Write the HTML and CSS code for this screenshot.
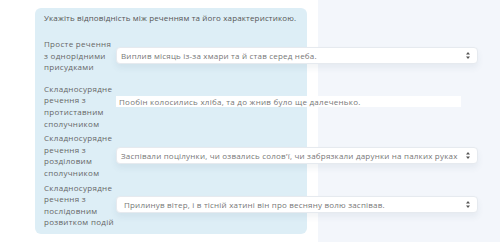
FILE: index.html
```html
<!DOCTYPE html>
<html lang="uk">
<head>
    <meta charset="UTF-8">
    <title>Відповідність</title>
    <link rel="stylesheet" href="styles.css">
</head>
<body>
    <!-- блок завдання -->
    <div class="task">
        <div class="task-title">Укажіть відповідність між реченням та його характеристикою.</div>

        <div class="rows">
            <!-- рядок 1 -->
            <div class="row first">
                <div class="label">Просте речення з однорідними присудками</div>
                <div class="select">
                    <span>Виплив місяць із-за хмари та й став серед неба.</span>
                    <svg class="arrows" width="4" height="7" viewBox="0 0 4 7"><path d="M2 0 L4 2.6 L0 2.6 Z M2 7 L4 4.4 L0 4.4 Z" fill="#555"/></svg>
                </div>
            </div>

            <!-- рядок 2 -->
            <div class="row">
                <div class="label">Складносурядне речення з протиставним сполучником</div>
                <div class="plain">Пообін колосились хліба, та до жнив було ще далеченько.</div>
            </div>

            <!-- рядок 3 -->
            <div class="row">
                <div class="label">Складносурядне речення з розділовим сполучником</div>
                <div class="select">
                    <span>Заспівали поцілунки, чи озвались солов'ї, чи забрязкали дарунки на палких руках</span>
                    <svg class="arrows" width="4" height="7" viewBox="0 0 4 7"><path d="M2 0 L4 2.6 L0 2.6 Z M2 7 L4 4.4 L0 4.4 Z" fill="#555"/></svg>
                </div>
            </div>

            <!-- рядок 4 -->
            <div class="row">
                <div class="label">Складносурядне речення з послідовним розвитком подій</div>
                <div class="select wide-pad">
                    <span>Прилинув вітер, і в тісній хатині він про весняну волю заспівав.</span>
                    <svg class="arrows" width="4" height="7" viewBox="0 0 4 7"><path d="M2 0 L4 2.6 L0 2.6 Z M2 7 L4 4.4 L0 4.4 Z" fill="#555"/></svg>
                </div>
            </div>
        </div>
    </div>
</body>
</html>
```

FILE: styles.css
```css
/* загальне */
body {
    margin: 0;
    height: 242px;
    overflow: hidden;
    font-family: "Open Sans", "Liberation Sans", sans-serif;
    background: linear-gradient(to right, #fff 318px, #f3f6fb 318px);
    padding-top: 8px;
    box-sizing: border-box;
}

/* блок завдання */
.task {
    margin-left: 35px;
    width: 272px;
    height: 226px;
    box-sizing: border-box;
    background-color: #ddeef6;
    border-radius: 6px;
    padding: 4px 0 0 9px;
}

.task-title {
    font-size: 8px;
    line-height: 12px;
    letter-spacing: 0.14px;
    color: #555;
    margin-bottom: 14px;
}

.rows {
    display: flex;
    flex-direction: column;
    gap: 3px;
}

.row {
    display: flex;
    align-items: center;
}

.row.first {
    margin-bottom: 7px;
}

.label {
    width: 71px;
    margin-right: 1px;
    font-size: 8px;
    line-height: 11.6px;
    letter-spacing: 0.3px;
    color: #666;
    flex-shrink: 0;
}

/* випадаючий список */
.select {
    width: 362px;
    height: 17px;
    flex-shrink: 0;
    box-sizing: border-box;
    background-color: #fff;
    border: 1px solid #e6eaef;
    border-radius: 4px;
    box-shadow: 0 4px 6px rgba(60, 80, 110, 0.07);
    display: flex;
    align-items: center;
    justify-content: space-between;
    padding: 0 7px 0 4px;
    font-size: 8px;
    letter-spacing: 0.2px;
    color: #777;
    white-space: nowrap;
}

.select.wide-pad {
    padding-left: 7px;
}

.plain {
    width: 345px;
    height: 11px;
    flex-shrink: 0;
    box-sizing: border-box;
    background-color: #fff;
    padding-left: 3px;
    font-size: 8px;
    line-height: 11px;
    letter-spacing: 0.25px;
    color: #777;
    margin-top: -8px;
}
```
